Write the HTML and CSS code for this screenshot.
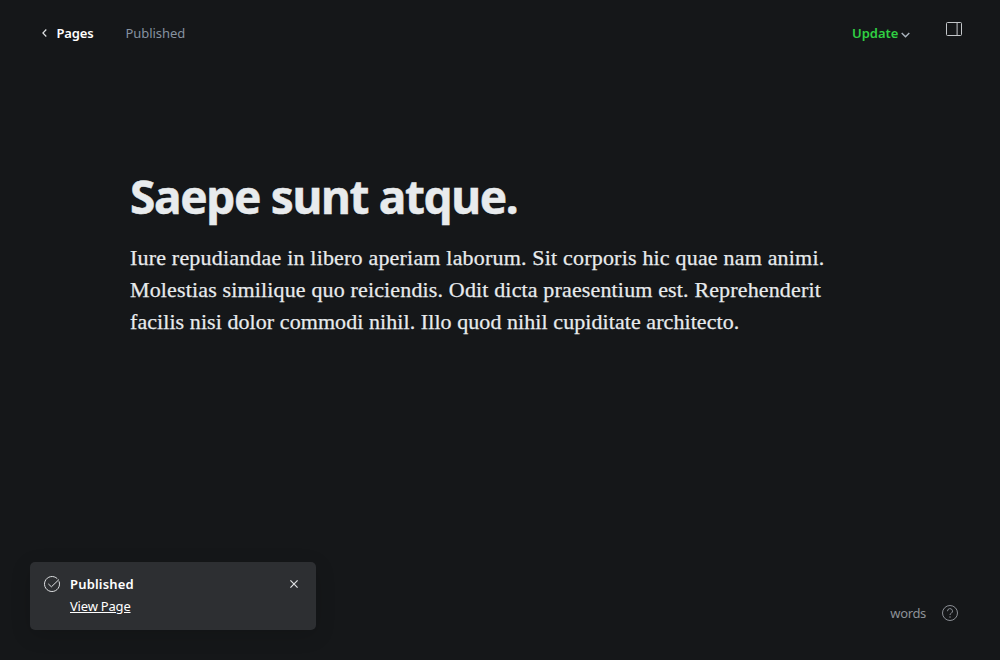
FILE: index.html
```html
<!DOCTYPE html>
<html lang="en">
<head>
<meta charset="utf-8">
<title>Saepe sunt atque.</title>
<link rel="stylesheet" href="styles.css">
</head>
<body>
<div class="editor">
  <header class="topbar">
    <a class="back"><svg class="chevron-left" width="5" height="8" viewBox="0 0 5 8"><path d="M4.3.5.9 4l3.4 3.5"/></svg><span class="back-label">Pages</span></a>
    <span class="status">Published</span>
    <button class="update"><span class="update-label">Update</span><svg class="chevron-down" width="9" height="6" viewBox="0 0 9 6"><path d="M.7.9 4.5 4.7 8.3.9"/></svg></button>
    <button class="sidebar-toggle" aria-label="Settings"><svg width="16" height="14" viewBox="0 0 16 14"><path d="M1.5.5h13a1 1 0 0 1 1 1v11a1 1 0 0 1-1 1h-13a1 1 0 0 1-1-1v-11a1 1 0 0 1 1-1zM11.1.5v13"/></svg></button>
  </header>
  <main class="content">
    <h1 class="title">Saepe sunt atque.</h1>
    <p class="body"><span class="line line-a">Iure repudiandae in libero aperiam laborum. Sit corporis hic quae nam animi.</span> <span class="line line-b">Molestias similique quo reiciendis. Odit dicta praesentium est. Reprehenderit</span> <span class="line line-c">facilis nisi dolor commodi nihil. Illo quod nihil cupiditate architecto.</span></p>
  </main>
  <footer class="footer">
    <aside class="toast">
      <svg class="check" width="16" height="16" viewBox="0 0 16 16"><path d="M15 5.3A7.5 7.5 0 1 1 13.3 2.7M4.3 7.9l3.1 2.9 7.6-7.3"/></svg>
      <div class="toast-text"><strong class="toast-title">Published</strong><a class="toast-link">View Page</a></div>
      <svg class="close" width="8" height="8" viewBox="0 0 8 8"><path d="M.4.4l7.2 7.2M7.6.4.4 7.6"/></svg>
    </aside>
    <div class="meta"><span class="words">words</span><svg class="help" width="16" height="16" viewBox="0 0 16 16"><circle cx="8" cy="8" r="7.5"/><path d="M5.5 6.2a2.5 2.5 0 1 1 3.7 2.1C8.4 8.7 8 9 8 10"/><circle class="dot" cx="8" cy="12" r=".7"/></svg></div>
  </footer>
</div>
</body>
</html>
```

FILE: styles.css
```css
* { box-sizing: border-box; }
body { margin: 0; background: #151719; font-family: "Noto Sans", sans-serif; font-size: 13px; }
svg { display: block; flex: none; fill: none; stroke: #dfe1e3; stroke-width: 1; }
button { background: none; border: 0; padding: 0; font: inherit; display: flex; }
.editor { height: 660px; display: flex; flex-direction: column; overflow: hidden; }
.topbar { height: 66px; display: flex; align-items: center; padding: 0 38px 0 42px; line-height: 20px; }
.back { display: flex; align-items: center; gap: 9.5px; width: 83.5px; color: #fff; font-weight: 600; }
.chevron-left { stroke-width: 1.2; margin-top: -1px; }
.back-label { letter-spacing: -.15px; }
.status { color: #8692a0; letter-spacing: -.05px; }
.update { margin-left: auto; align-items: center; gap: 3px; width: 94px; color: #30cf43; font-weight: 600; line-height: 20px; }
.update-label { letter-spacing: 0; }
.chevron-down { stroke: #abb4be; stroke-width: 1.4; margin-top: 4px; }
.sidebar-toggle { margin-top: -8px; }
.sidebar-toggle svg { stroke: #c4c7ca; }
.content { flex: 1; padding: 100px 130px 0; color: #e8ebed; }
.title { margin: 0; font-size: 46px; line-height: 60px; font-weight: 700; letter-spacing: -1.36px; white-space: nowrap; -webkit-text-stroke: .5px #e8ebed; }
.body { margin: 16px 0 0; font-family: "Liberation Serif", serif; font-size: 22px; line-height: 32px; -webkit-text-stroke: .25px #e8ebed; }
.line { display: block; white-space: nowrap; }
.line-a { letter-spacing: .19px; }
.line-b { letter-spacing: .15px; }
.line-c { letter-spacing: .07px; }
.footer { display: flex; justify-content: space-between; align-items: flex-start; height: 98px; padding: 0 42px 0 30px; }
.toast { display: flex; align-items: flex-start; width: 286px; height: 68px; padding: 12px 18px 0 14px; border-radius: 5px; background: #2d2f32; color: #fff; box-shadow: 0 5px 20px rgba(0,0,0,.15); }
.check { margin: 2px 10px 0 0; }
.toast-text { display: flex; flex-direction: column; flex: 1; align-items: flex-start; }
.toast-title { font-weight: 600; line-height: 20px; letter-spacing: .18px; }
.toast-link { line-height: 20px; margin-top: 2px; text-decoration: underline; letter-spacing: -.2px; }
.close { stroke-width: 1.2; margin-top: 6px; }
.meta { display: flex; align-items: center; gap: 16px; margin-top: 41px; line-height: 20px; }
.words { letter-spacing: -.35px; color: #8d9197; }
.help { stroke: #8b8f95; }
.dot { fill: #8b8f95; stroke: none; }
```
